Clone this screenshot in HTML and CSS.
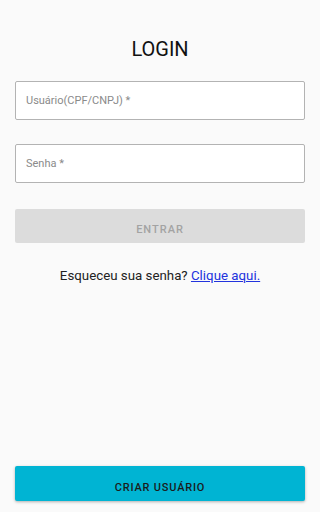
FILE: index.html
```html
<!DOCTYPE html>
<html lang="pt-BR">
<head>
<meta charset="utf-8">
<title>Login</title>
<link rel="stylesheet" href="styles.css">
</head>
<body>
<main class="page">
  <h1 class="title">LOGIN</h1>
  <form class="form">
    <div class="field"><input class="input" type="text" placeholder="Usuário(CPF/CNPJ) *"></div>
    <div class="field"><input class="input" type="password" placeholder="Senha *"></div>
    <button type="button" class="btn btn-disabled">ENTRAR</button>
  </form>
  <p class="forgot">Esqueceu sua senha? <a href="#" class="link">Clique aqui.</a></p>
  <div class="spacer"></div>
  <button type="button" class="btn btn-primary">CRIAR USUÁRIO</button>
</main>
</body>
</html>
```
FILE: styles.css
```css
html, body {
  margin: 0;
  padding: 0;
  height: 100%;
}
body {
  background: #fafafa;
  font-family: Roboto, "Noto Sans", Arial, sans-serif;
  color: #212121;
}
.page {
  box-sizing: border-box;
  height: 512px;
  padding: 37px 15px 11px;
  display: flex;
  flex-direction: column;
}
.title {
  margin: 0;
  font-size: 20px;
  line-height: 24px;
  font-weight: 400;
  text-align: center;
  color: #111;
}
.form {
  margin-top: 20px;
  display: flex;
  flex-direction: column;
}
.field + .field {
  margin-top: 24px;
}
.input {
  display: block;
  box-sizing: border-box;
  width: 100%;
  height: 39px;
  margin: 0;
  padding: 0 10px;
  border: 1px solid #b3b3b3;
  border-radius: 2px;
  background: #fff;
  font-family: Roboto, "Noto Sans", Arial, sans-serif;
  font-size: 11px;
  color: #212121;
  outline: none;
}
.input::placeholder {
  color: #8a8a8a;
}
.btn {
  display: block;
  box-sizing: border-box;
  width: 100%;
  height: 34px;
  margin: 0;
  padding: 7px 0 0;
  border: none;
  border-radius: 2px;
  font-family: Roboto, "Noto Sans", Arial, sans-serif;
  font-size: 11px;
  font-weight: 500;
  letter-spacing: 1px;
}
.btn-disabled {
  margin-top: 26px;
  background: #dcdcdc;
  color: #a3a3a3;
}
.forgot {
  margin: 23px 0 0;
  font-size: 13.3px;
  line-height: 20px;
  text-align: center;
  color: #222;
}
.link {
  color: #2233dd;
  text-decoration: underline;
}
.spacer {
  flex: 1;
}
.btn-primary {
  height: 35px;
  background: #00b4d3;
  color: #1b1b1b;
  letter-spacing: 0.8px;
  box-shadow: 0 1px 3px rgba(0,0,0,0.3);
}
```
